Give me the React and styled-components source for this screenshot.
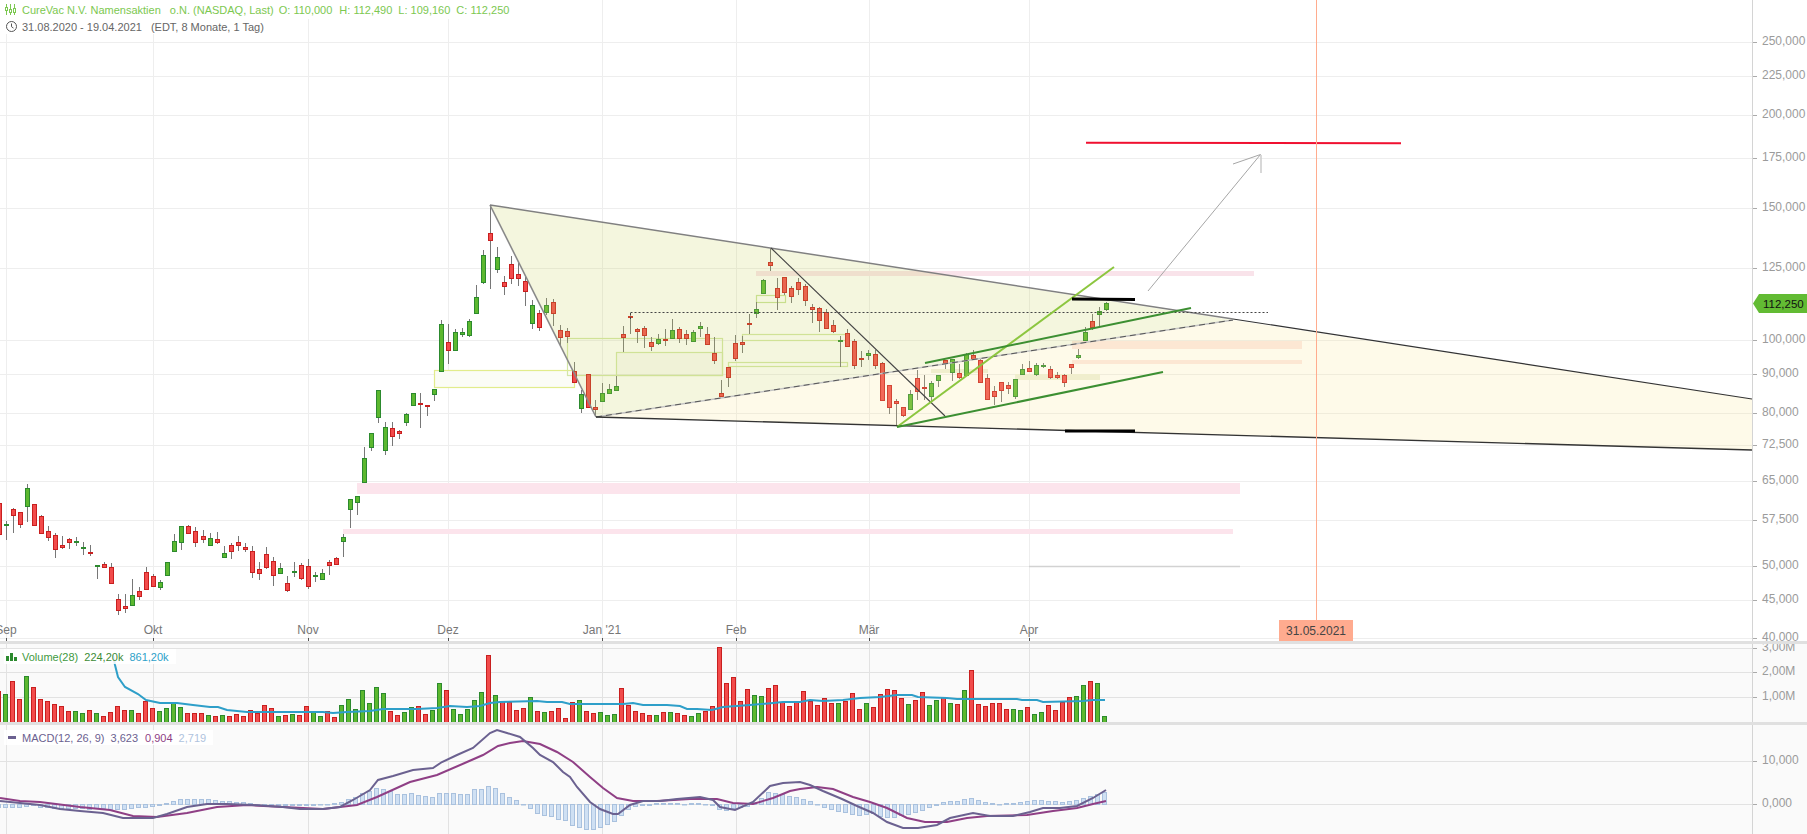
import React from 'react'
import styled, { createGlobalStyle } from 'styled-components'

const PLOT_W = 1752

const GlobalStyle = createGlobalStyle`
  html, body { margin: 0; padding: 0; background: #fff; overflow: hidden; }
  body { font-family: "Liberation Sans", Arial, sans-serif; font-size: 12px; }
`

// [colour, wick top, body top, body bottom, wick bottom] in page pixels
const CANDLES = [
  ['r',503,503,534,540],['g',521,524,525,540],['r',508,509,515,533],['r',512,512,524,528],['g',484,488,506,522],
  ['r',504,504,525,526],['r',515,516,533,534],['r',526,531,537,541],['r',533,535,549,558],['r',536,545,547,549],
  ['r',538,539,542,549],['g',537,541,542,546],['g',542,547,548,555],['r',545,552,553,556],['g',565,565,566,579],
  ['r',562,564,567,567],['r',563,567,583,583],['r',594,599,610,615],['r',594,606,608,613],['g',579,595,605,605],
  ['r',587,591,596,600],['r',567,572,589,589],['r',574,576,586,587],['g',580,582,587,590],['g',562,562,575,575],
  ['g',534,541,551,551],['g',526,526,542,550],['r',525,526,533,534],['r',527,531,542,547],['r',530,536,539,543],
  ['g',533,538,545,545],['r',532,539,542,544],['g',546,553,557,557],['r',543,545,551,559],['r',536,542,545,551],
  ['r',543,547,549,552],['r',546,551,572,578],['r',562,569,573,580],['r',547,554,567,569],['r',557,561,575,586],
  ['g',563,568,573,573],['r',576,583,590,592],['g',562,571,572,577],['r',563,565,578,580],['r',559,566,586,589],
  ['g',572,575,576,582],['g',569,573,579,579],['r',560,562,565,575],['r',557,558,564,564],['g',534,537,541,557],
  ['g',499,499,509,528],['g',496,496,502,515],['g',447,458,482,482],['g',433,433,447,451],['g',390,390,417,423],
  ['g',422,427,450,455],['r',422,428,436,446],['r',430,431,433,439],['g',413,414,422,426],['g',393,393,405,405],
  ['r',393,403,404,428],['r',405,405,406,416],['g',389,389,394,401],['g',320,324,371,372],['r',324,342,350,364],
  ['g',329,332,350,350],['g',328,332,334,337],['g',319,321,335,337],['g',285,297,313,314],['g',250,255,282,284],
  ['r',205,233,240,289],['g',247,257,269,273],['r',276,282,286,295],['r',256,264,278,284],['r',263,274,278,286],
  ['r',277,281,291,306],['g',300,305,323,329],['r',310,313,327,331],['g',298,305,312,315],['r',299,302,313,326],
  ['r',325,330,337,347],['r',328,331,336,343],['r',362,371,382,383],['g',390,394,408,413],['r',374,374,407,407],
  ['r',400,407,409,417],['g',383,393,401,401],['g',384,389,393,393],['g',376,386,390,390],['r',326,334,337,352],
  ['r',313,316,317,334],['r',328,329,331,343],['r',326,328,335,348],['r',337,342,346,351],['g',334,339,343,345],
  ['r',329,339,340,346],['g',319,330,338,338],['r',327,329,338,343],['r',330,334,338,345],['g',330,332,341,341],
  ['g',322,326,328,337],['r',327,334,344,344],['r',337,353,360,364],['r',380,393,396,397],['r',367,367,377,387],
  ['r',335,343,358,361],['r',336,342,344,353],['r',314,323,324,334],['g',302,309,313,318],['g',279,280,293,294],
  ['r',248,262,265,271],['r',278,288,297,310],['r',277,277,292,295],['r',286,288,296,303],['r',278,282,289,295],
  ['r',284,286,300,306],['r',304,307,309,323],['r',307,308,320,332],['r',309,312,328,329],['r',320,325,331,333],
  ['g',336,340,341,367],['r',329,333,346,347],['r',339,341,365,369],['r',351,358,359,367],['g',350,353,355,360],
  ['r',350,354,365,369],['r',362,363,400,401],['r',385,385,407,414],['r',399,401,403,426],['r',407,407,415,417],
  ['g',390,394,409,409],['r',370,378,391,400],['r',375,387,388,400],['g',381,383,396,403],['g',375,375,380,387],
  ['r',360,360,363,369],['g',359,359,372,381],['r',364,373,377,379],['g',353,354,375,376],['r',350,355,359,360],
  ['r',358,360,382,382],['r',374,378,399,399],['r',386,391,396,405],['r',382,382,390,402],['r',382,385,388,394],
  ['g',379,379,396,399],['g',364,369,374,374],['r',361,368,371,372],['g',363,365,374,376],['g',363,365,366,368],
  ['r',366,369,377,379],['r',372,375,377,379],['r',374,375,382,387],['r',364,364,367,374],['g',349,355,357,359],
  ['g',327,332,340,340],['r',314,321,327,330],['g',307,311,314,326],['g',302,303,309,311],
]

// signed bar height in px: positive red, negative green
const VOLUME = [
  31,-28,41,23,-46,35,23,21,18,16,11,-11,-9,12,-9,6,10,16,12,-12,9,21,14,-11,-14,-20,-15,9,9,9,-7,6,-7,6,8,6,12,9,17,14,
  -6,7,-8,7,16,-11,-6,11,5,-17,-23,-13,-32,-19,-35,-29,11,7,-10,-15,16,8,-12,-39,32,-13,-8,-13,-22,-30,67,-27,
  21,20,12,14,-25,11,-10,11,14,4,20,-22,11,9,-10,-7,-8,34,17,11,9,7,-7,10,-10,9,7,-6,-9,11,16,75,39,45,21,33,-27,-26,34,37,20,16,21,31,
  21,17,24,19,-19,21,29,13,-19,15,28,33,32,24,-18,22,30,-17,-22,25,-19,18,-32,52,18,16,19,19,13,-13,-12,15,-8,-10,17,12,20,25,-26,-37,41,-39,-6,
]

const HISTOGRAM = [
  -3,-3,-3,-3,-2,-1,-3,-3,-4,-4,-4,-4,-4,-5,-4,-4,-5,-5,-5,-4,-3,-3,-2,-1,1,3,5,5,5,5,5,4,3,3,2,2,1,0,0,-1,-1,-1,-1,-1,-1,-1,0,0,1,2,
  5,7,11,13,16,15,13,10,10,11,9,8,7,11,11,11,10,10,15,15,18,16,
  11,7,4,0,-4,-9,-11,-12,-15,-16,-21,-23,-25,-25,-23,-20,-17,-11,-5,-2,-1,-1,1,1,1,1,0,1,1,0,-1,-5,-6,-4,-3,-2,2,6,12,11,10,8,7,5,
  3,0,-3,-5,-7,-8,-10,-11,-10,-9,-12,-13,-13,-11,-10,-8,-6,-3,-1,2,3,3,5,6,4,2,1,0,1,1,2,3,4,4,3,3,2,3,4,6,8,10,12,
]

const VOLUME_AVG = '113,655 115,665 118,677 125,687 138,694 146,700 160,703 177,703 193,705 210,707 218,707 227,710 247,712 323,712 333,713 347,712 370,711 383,709 417,709 437,708 450,706 467,707 480,706 490,703 500,702 537,701 547,702 562,702 570,704 623,704 633,703 643,705 667,705 680,706 687,709 697,709 712,710 723,707 750,705 773,703 783,702 800,702 810,700 823,701 843,700 860,698 880,697 897,695 912,695 918,697 947,698 957,699 1017,699 1022,700 1037,700 1043,702 1083,701 1093,700 1105,700'
const MACD_LINE = '0,801 20,803 40,805 60,809 80,811 103,813 123,818 153,818 167,814 187,807 207,804 227,804 253,805 283,807 300,809 323,809 340,807 353,800 370,790 378,780 393,776 413,770 433,768 442,762 457,755 473,748 490,733 497,730 507,733 520,737 533,748 540,755 553,762 563,772 570,777 577,787 590,802 600,809 613,814 618,814 630,805 643,801 660,801 677,799 700,797 713,800 720,807 735,810 753,802 770,786 783,783 800,782 810,785 823,791 842,799 857,806 873,813 887,822 903,828 918,828 937,825 950,818 973,813 990,816 1013,816 1030,812 1043,808 1060,808 1077,806 1093,798 1106,790'
const SIGNAL_LINE = '0,798 20,801 40,802 80,807 110,810 133,816 157,817 187,813 217,807 247,805 283,807 323,809 357,805 377,797 410,782 437,775 467,762 483,755 498,746 510,743 523,741 540,744 557,752 573,762 590,777 603,788 617,798 633,801 657,801 690,799 717,799 733,803 753,804 773,798 790,791 800,789 817,787 833,789 853,797 870,802 887,808 907,818 925,822 947,822 967,818 987,816 1027,815 1053,811 1077,808 1093,804 1106,801'

const MONTHS = [
  { x: 6, label: 'Sep' }, { x: 153, label: 'Okt' }, { x: 308, label: 'Nov' }, { x: 448, label: 'Dez' },
  { x: 602, label: "Jan '21" }, { x: 736, label: 'Feb' }, { x: 869, label: 'Mär' }, { x: 1029, label: 'Apr' },
]
const PRICE_TICKS = [
  [42,'250,000'],[76,'225,000'],[115,'200,000'],[158,'175,000'],[208,'150,000'],[268,'125,000'],[340,'100,000'],
  [374,'90,000'],[413,'80,000'],[445,'72,500'],[481,'65,000'],[520,'57,500'],[566,'50,000'],[600,'45,000'],[638,'40,000'],
]
const VOLUME_TICKS = [[648,'3,00M'],[672,'2,00M'],[697,'1,00M']]
const MACD_TICKS = [[761,'10,000'],[804,'0,000']]

const ZONES = [
  [756,271,498,5,'#f9e3ea'],[357,483,883,11,'#fce4ec'],[343,529,890,5,'#fce4ec'],
  [1072,341,230,8,'#fde8e4'],[1072,360,230,4,'#fde8e4'],[931,369,57,4,'#eef0dc'],[1015,374,85,6,'#eef0dc'],
]
const BOXES = [
  [434,370,140,17,'#e2ec8c','#fbfcf6'],[567,338,155,37,'#d3e6a6','none'],[616,352,106,23,'#d3e6a6','rgba(190,200,150,.08)'],
  [567,362,154,0,'#d3e6a6','none'],[756,295,29,7,'#c9e39a','none'],[742,334,105,6,'#d3e6a6','none'],[728,362,119,4,'#d3e6a6','none'],
]

const Page = styled.div`
  width: 1807px;
  height: 834px;
  display: flex;
  flex-direction: column;
  overflow: hidden;
  background: #fff;
`
const Pane = styled.section`
  height: ${p => p.$h}px;
  display: flex;
  flex: none;
  background: ${p => p.$bg || '#fff'};
`
const Plot = styled.div`
  position: relative;
  width: ${PLOT_W}px;
  flex: none;
  svg { display: block; }
`
const Axis = styled.div`
  position: relative;
  flex: 1;
  overflow: hidden;
  border-left: 1px solid #d4d4d4;
`
const Tick = styled.span`
  position: absolute;
  left: 9px;
  color: #9b9b9b;
  line-height: 14px;
  white-space: nowrap;
  transform: translateY(-8px);
  &::before {
    content: '';
    position: absolute;
    left: -9px;
    top: 8px;
    width: 4px;
    height: 1px;
    background: #aaa;
  }
`
const Sash = styled.div`
  height: 3px;
  flex: none;
  background: #e0e0e0;
`
const Legend = styled.div`
  position: absolute;
  left: ${p => p.$left || 0}px;
  top: ${p => p.$top || 0}px;
  display: flex;
  flex-direction: column;
  align-items: flex-start;
  font-size: 11px;
`
const LegendLine = styled.div`
  display: flex;
  align-items: center;
  height: ${p => p.$h}px;
  padding: 0 ${p => p.$padRight ?? 2}px 0 ${p => p.$padLeft ?? 5}px;
  background: ${p => p.$bg || '#fff'};
  color: ${p => p.$color};
  white-space: nowrap;
  svg { flex: none; margin-right: ${p => p.$iconGap ?? 6}px; }
`
const Value = styled.span`
  margin-left: ${p => p.$gap || 0}px;
  color: ${p => p.$color || 'inherit'};
`
const MonthLabel = styled.span`
  position: absolute;
  top: 623px;
  color: #777;
  line-height: 14px;
  white-space: nowrap;
  transform: translateX(-50%);
`
const DateBadge = styled.div`
  position: absolute;
  left: 1279px;
  top: 620px;
  width: 74px;
  height: 21px;
  display: flex;
  align-items: center;
  justify-content: center;
  background: #ffab8f;
  color: #444;
`
const PriceTag = styled.div`
  position: absolute;
  left: 0;
  top: 294px;
  width: 54px;
  height: 19px;
  display: flex;
  align-items: center;
  padding-left: 10px;
  box-sizing: border-box;
  background: #62bb33;
  color: #111;
  font-size: 11.5px;
  clip-path: polygon(0 50%, 6px 0, 100% 0, 100% 100%, 6px 100%);
`

const colors = {
  r: { fill: '#f24b4b', stroke: '#c81f1f' },
  g: { fill: '#5cb82f', stroke: '#2c8a2e' },
}

const candleX = i => i * 7 - 0.5 + (i >= 29 ? 1 : 0)
const barX = i => i * 7 - 1.5

function Grid({ rows, top, bottom, color }) {
  return (
    <g stroke={color} strokeWidth="1" shapeRendering="crispEdges">
      {rows.map(y => <line key={y} x1="0" x2={PLOT_W} y1={y + 0.5} y2={y + 0.5} />)}
      {MONTHS.map(m => <line key={m.x} x1={m.x + 0.5} x2={m.x + 0.5} y1={top} y2={bottom} />)}
    </g>
  )
}

function Candle({ i, data }) {
  const [c, hi, top, bot, lo] = data
  const x = candleX(i)
  const flat = bot - top < 2
  return (
    <g>
      <line x1={x} x2={x} y1={hi} y2={lo} stroke="#777" />
      {flat
        ? <rect x={x - 2.5} y={top} width="5" height="2" fill={colors[c].stroke} />
        : <rect x={x - 2} y={top + 0.5} width="4" height={bot - top} fill={colors[c].fill} stroke={colors[c].stroke} />}
    </g>
  )
}

function CandleIcon() {
  return (
    <svg width="11" height="11" viewBox="0 0 11 11" fill="none" stroke="#7cc850">
      <path d="M1.5 0v11M5.5 0v11M9.5 0v11" />
      <rect x="0.5" y="3.5" width="2" height="3" fill="#fff" />
      <rect x="4.5" y="5.5" width="2" height="3" fill="#fff" />
      <rect x="8.5" y="4.5" width="2" height="4" fill="#fff" />
    </svg>
  )
}

function ClockIcon() {
  return (
    <svg width="11" height="11" viewBox="0 0 11 11" fill="none" stroke="#555">
      <circle cx="5.5" cy="5.5" r="5" />
      <path d="M5.5 2.5v3.2l2 1.4" />
    </svg>
  )
}

function PriceChart() {
  return (
    <svg width={PLOT_W} height="641" viewBox={`0 0 ${PLOT_W} 641`}>
      <Grid rows={PRICE_TICKS.map(t => t[0])} top={0} bottom={641} color="#eeeeee" />
      {ZONES.map(([x, y, w, h, fill]) => <rect key={`${x}-${y}`} x={x} y={y} width={w} height={h} fill={fill} />)}
      <line x1="1029" x2="1240" y1="566.5" y2="566.5" stroke="#d2d2d2" strokeWidth="1.5" />
      {BOXES.map(([x, y, w, h, stroke, fill]) => (
        <rect key={`${x}-${y}`} x={x + 0.5} y={y + 0.5} width={w} height={h} fill={fill} stroke={stroke} strokeWidth="1.2" />
      ))}
      {CANDLES.map((d, i) => <Candle key={i} i={i} data={d} />)}

      <polygon points="596,417 1233,320 1752,399 1752,450" fill="rgba(250,230,145,.2)" />
      <polygon points="490,205 596,417 1233,320" fill="rgba(200,210,90,.2)" />

      <path d="M490 205L596 417" stroke="#8a8a8a" strokeWidth="1.6" fill="none" />
      <path d="M490 205L1233 319" stroke="#808080" strokeWidth="1.5" fill="none" />
      <path d="M1233 319L1752 399" stroke="#333" strokeWidth="1.2" fill="none" />
      <path d="M596 417L1233 320" stroke="#c4c4c4" strokeWidth="1.5" fill="none" />
      <path d="M596 417L1233 320" stroke="#555" strokeWidth="1" strokeDasharray="6 4" fill="none" />
      <path d="M596 417L1752 450" stroke="#333" strokeWidth="1.3" fill="none" />
      <path d="M771 248L945 416" stroke="#444" strokeWidth="1.1" fill="none" />
      <path d="M630.5 313V320M630.5 312.5H1268" stroke="#444" strokeWidth="1" strokeDasharray="2 2" fill="none" />

      <path d="M897 427L1114 267" stroke="#8cc63f" strokeWidth="2" fill="none" />
      <path d="M925 363L1191 308" stroke="#3c8f32" strokeWidth="2" fill="none" />
      <path d="M897 427L1163 372" stroke="#3c8f32" strokeWidth="2" fill="none" />
      <path d="M1072 299L1135 299.5" stroke="#000" strokeWidth="3" fill="none" />
      <path d="M1065 431L1135 431" stroke="#000" strokeWidth="3" fill="none" />

      <path d="M1086 142.7L1401 143.3" stroke="#f01030" strokeWidth="2" fill="none" />
      <path d="M1148 291L1260.5 154.5M1233 164L1260.5 154.5" stroke="#a6a6a6" strokeWidth="1" fill="none" />
      <path d="M1261 155V173" stroke="#cfcfcf" strokeWidth="1.6" fill="none" />

      <line x1="1316.5" x2="1316.5" y1="0" y2="620" stroke="#ffac8e" />
      {MONTHS.map(m => <line key={m.x} x1={m.x + 0.5} x2={m.x + 0.5} y1="638" y2="641" stroke="#555" />)}
    </svg>
  )
}

function VolumeChart() {
  return (
    <svg width={PLOT_W} height="78" viewBox={`0 644 ${PLOT_W} 78`}>
      <Grid rows={VOLUME_TICKS.map(t => t[0])} top={644} bottom={722} color="#e2e2e2" />
      {VOLUME.map((v, i) => {
        const c = colors[v > 0 ? 'r' : 'g']
        const h = Math.abs(v)
        return <rect key={i} x={barX(i) - 2} y={722.5 - h} width="4" height={h} fill={c.fill} stroke={c.stroke} />
      })}
      <polyline points={VOLUME_AVG} fill="none" stroke="#2e9fc9" strokeWidth="2" />
    </svg>
  )
}

function MacdChart() {
  return (
    <svg width={PLOT_W} height="109" viewBox={`0 725 ${PLOT_W} 109`}>
      <Grid rows={MACD_TICKS.map(t => t[0])} top={725} bottom={834} color="#e2e2e2" />
      {HISTOGRAM.map((v, i) => (
        <rect
          key={i}
          x={barX(i) - 2}
          y={(v > 0 ? 804.5 - v : 804.5)}
          width="4"
          height={Math.max(Math.abs(v), 0.5)}
          fill="#cfe0f3"
          stroke="#a9c1de"
        />
      ))}
      <polyline points={SIGNAL_LINE} fill="none" stroke="#8f3f85" strokeWidth="2" />
      <polyline points={MACD_LINE} fill="none" stroke="#6b6190" strokeWidth="2" />
    </svg>
  )
}

function Ticks({ items, offset }) {
  return items.map(([y, label]) => <Tick key={label} style={{ top: y - offset }}>{label}</Tick>)
}

export default function App() {
  return (
    <Page>
      <GlobalStyle />
      <Pane $h={641}>
        <Plot>
          <PriceChart />
          <Legend>
            <LegendLine $color="#7cc850" $h={19} $padRight={1}>
              <CandleIcon />
              <span>CureVac N.V. Namensaktien</span>
              <Value $gap={9}>o.N. (NASDAQ, Last)</Value>
              <Value $gap={5}>O: 110,000</Value>
              <Value $gap={7}>H: 112,490</Value>
              <Value $gap={6}>L: 109,160</Value>
              <Value $gap={6}>C: 112,250</Value>
            </LegendLine>
            <LegendLine $color="#666" $h={15} $padLeft={6} $iconGap={5}>
              <ClockIcon />
              <span>31.08.2020 - 19.04.2021</span>
              <Value $gap={9}>(EDT, 8 Monate, 1 Tag)</Value>
            </LegendLine>
          </Legend>
          {MONTHS.map(m => <MonthLabel key={m.x} style={{ left: m.x }}>{m.label}</MonthLabel>)}
          <DateBadge>31.05.2021</DateBadge>
        </Plot>
        <Axis>
          <Ticks items={PRICE_TICKS} offset={0} />
          <PriceTag>112,250</PriceTag>
        </Axis>
      </Pane>
      <Sash />
      <Pane $h={78} $bg="#fafafa">
        <Plot>
          <VolumeChart />
          <Legend $left={4} $top={5}>
            <LegendLine $color="#3f9a3f" $bg="rgba(255,255,255,.85)" $h={15} $padLeft={2} $padRight={7} $iconGap={5}>
              <svg width="11" height="8" viewBox="0 0 11 8" fill="#2c8a2e">
                <rect x="0" y="3" width="3" height="5" />
                <rect x="4" y="0" width="3" height="8" />
                <rect x="8" y="4" width="3" height="4" />
              </svg>
              <span>Volume(28)</span>
              <Value $gap={6} $color="#3d8b37">224,20k</Value>
              <Value $gap={6} $color="#2e9fc9">861,20k</Value>
            </LegendLine>
          </Legend>
        </Plot>
        <Axis>
          <Ticks items={VOLUME_TICKS} offset={644} />
        </Axis>
      </Pane>
      <Sash />
      <Pane $h={109} $bg="#fafafa">
        <Plot>
          <MacdChart />
          <Legend $left={4} $top={5}>
            <LegendLine $color="#6b6190" $bg="rgba(255,255,255,.85)" $h={15} $padLeft={4} $padRight={7} $iconGap={6}>
              <svg width="8" height="3" viewBox="0 0 8 3" fill="#6b6190"><rect width="8" height="3" /></svg>
              <span>MACD(12, 26, 9)</span>
              <Value $gap={6}>3,623</Value>
              <Value $gap={7} $color="#8f3f85">0,904</Value>
              <Value $gap={6} $color="#afc3de">2,719</Value>
            </LegendLine>
          </Legend>
        </Plot>
        <Axis>
          <Ticks items={MACD_TICKS} offset={725} />
        </Axis>
      </Pane>
    </Page>
  )
}
